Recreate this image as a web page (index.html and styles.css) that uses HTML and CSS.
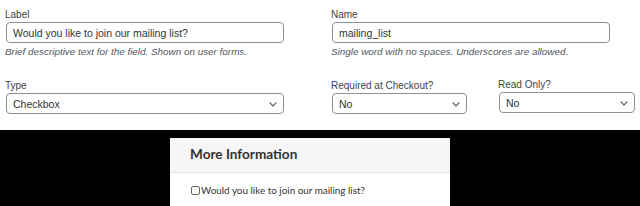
FILE: index.html
```html
<!DOCTYPE html>
<html>

<head>
  <meta charset="UTF-8">
  <title>Custom Field</title>
  <link rel="stylesheet" href="styles.css">
</head>

<body>
  <section class="settings">
    <div class="row">
      <div class="field">
        <label for="fieldLabel">Label</label>
        <input type="text" id="fieldLabel" value="Would you like to join our mailing list?">
        <p class="help">Brief descriptive text for the field. Shown on user forms.</p>
      </div>
      <div class="field">
        <label for="fieldName">Name</label>
        <input type="text" id="fieldName" value="mailing_list">
        <p class="help">Single word with no spaces. Underscores are allowed.</p>
      </div>
    </div>

    <div class="row row-bottom">
      <div class="field">
        <label for="fieldType">Type</label>
        <div class="select-wrap">
          <select id="fieldType">
            <option>Checkbox</option>
          </select>
          <svg class="chevron" width="8" height="5" viewBox="0 0 8 5"><path d="M0.7 0.7 L4 4 L7.3 0.7" fill="none" stroke="#50575e" stroke-width="1.2"/></svg>
        </div>
      </div>
      <div class="pair">
        <div class="field">
          <label for="fieldRequired">Required at Checkout?</label>
          <div class="select-wrap">
            <select id="fieldRequired">
              <option>No</option>
            </select>
            <svg class="chevron" width="8" height="5" viewBox="0 0 8 5"><path d="M0.7 0.7 L4 4 L7.3 0.7" fill="none" stroke="#50575e" stroke-width="1.2"/></svg>
          </div>
        </div>
        <div class="field field-raised">
          <label for="fieldReadOnly">Read Only?</label>
          <div class="select-wrap">
            <select id="fieldReadOnly">
              <option>No</option>
            </select>
            <svg class="chevron" width="8" height="5" viewBox="0 0 8 5"><path d="M0.7 0.7 L4 4 L7.3 0.7" fill="none" stroke="#50575e" stroke-width="1.2"/></svg>
          </div>
        </div>
      </div>
    </div>
  </section>

  <!-- Preview of the field on the checkout form -->
  <section class="preview">
    <div class="panel">
      <h3 class="panel-title">More Information</h3>
      <div class="panel-body">
        <label class="check">
          <input type="checkbox">
          Would you like to join our mailing list?
        </label>
      </div>
    </div>
  </section>
</body>

</html>
```

FILE: styles.css
```css
body {
  font-family: "Liberation Sans", Arial, sans-serif;
  margin: 0;
  padding: 0;
  background-color: #000;
}

.settings {
  background-color: #fff;
  height: 130px;
  padding: 9px 6px 0 6px;
  box-sizing: border-box;
}

.row {
  display: grid;
  grid-template-columns: 278px 278px;
  column-gap: 48px;
}

.row-bottom {
  margin-top: 22px;
}

.pair {
  display: grid;
  grid-template-columns: 135px 136px;
  column-gap: 32px;
}

.field {
  display: flex;
  flex-direction: column;
}

.field-raised {
  margin-top: -1px;
}

.field label {
  font-size: 10px;
  line-height: 12px;
  color: #3c434a;
  margin: 0 0 1px -1px;
}

.field input,
.field select {
  font-family: "Liberation Sans", Arial, sans-serif;
  font-size: 10.5px;
  color: #2c3338;
  height: 21px;
  box-sizing: border-box;
  border: 1px solid #8c8f94;
  border-radius: 4px;
  padding: 0 6px;
  background-color: #fff;
  width: 100%;
  margin: 0;
}

.field select {
  appearance: none;
  -webkit-appearance: none;
}

.select-wrap {
  position: relative;
}

.chevron {
  position: absolute;
  right: 7px;
  top: 9px;
  pointer-events: none;
}

.help {
  font-size: 9.9px;
  line-height: 12px;
  font-style: italic;
  color: #50575e;
  margin: 3px 0 0 -1px;
}

.preview {
  padding: 8px 0 0 170px;
}

.panel {
  width: 280px;
  height: 68px;
  background-color: #fff;
}

.panel-title {
  font-family: Lato, sans-serif;
  font-size: 13.6px;
  font-weight: bold;
  color: #333;
  background-color: #f6f6f6;
  border-bottom: 1px solid #e2e2e2;
  margin: 0;
  height: 35px;
  line-height: 33px;
  padding-left: 20px;
  box-sizing: border-box;
}

.panel-body {
  padding: 11px 0 0 21px;
}

.check {
  font-family: Lato, sans-serif;
  font-size: 9.9px;
  color: #333;
  display: flex;
  align-items: center;
}

.check input {
  appearance: none;
  -webkit-appearance: none;
  width: 9px;
  height: 9px;
  border: 1px solid #666;
  border-radius: 2px;
  margin: 0 1px 0 0;
  background-color: #fff;
}
```
